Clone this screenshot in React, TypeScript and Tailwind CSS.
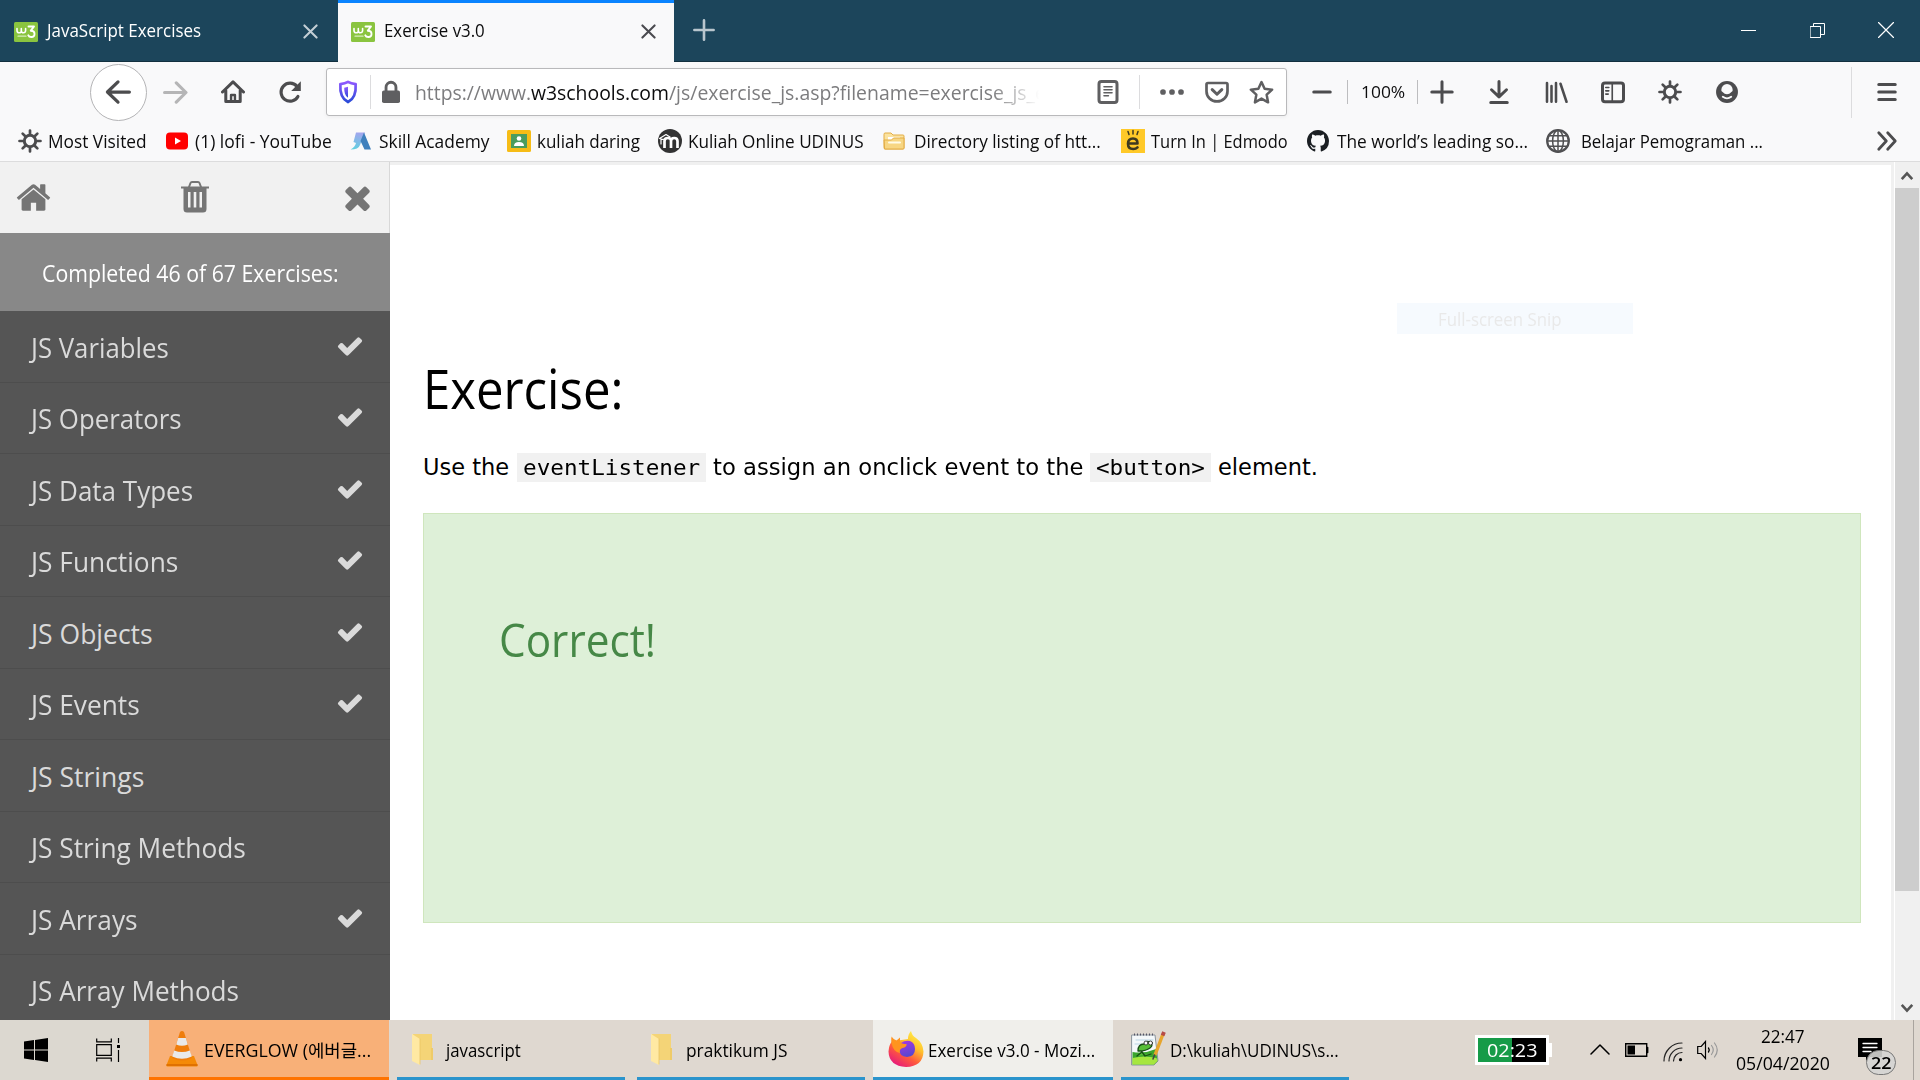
import { useLayoutEffect, useRef, useState } from "react";
import type { ReactNode } from "react";

/* One line of text, condensed or widened to fill the width its class sets. */
function T({ className = "", children }: { className?: string; children: ReactNode }) {
  const outer = useRef<HTMLSpanElement>(null);
  const inner = useRef<HTMLSpanElement>(null);
  const [k, setK] = useState(1);
  useLayoutEffect(() => {
    if (outer.current && inner.current && inner.current.offsetWidth > 0) {
      setK(outer.current.clientWidth / inner.current.offsetWidth);
    }
  }, []);
  return (
    <span ref={outer} className={`block shrink-0 whitespace-nowrap leading-none ${className}`}>
      <span ref={inner} className="inline-block origin-left" style={{ transform: `scaleX(${k})` }}>
        {children}
      </span>
    </span>
  );
}

function Icon({ className = "", box = "0 0 16 16", children }: { className?: string; box?: string; children: ReactNode }) {
  return (
    <svg viewBox={box} fill="none" strokeLinecap="round" strokeLinejoin="round" className={`block shrink-0 ${className}`}>
      {children}
    </svg>
  );
}

const stroke = { stroke: "currentColor", strokeWidth: 2 };

function W3Icon() {
  return (
    <Icon className="h-5 w-6" box="0 0 24 20">
      <rect width="24" height="20" rx="1.5" fill="#8ac43f" />
      <path d="M3 6.500v2q0 2.300 2.200 2.300T7.300 8.500V6.500M7.300 8.500q0 2.300 2.100 2.300t2.200-2.300V6.500" stroke="#fff" strokeWidth="1.600" />
      <path d="M14.500 4.500H20l-3.200 4.200q3.700 0 3.700 3.200T17.300 15Q15 15 14.300 13.300" stroke="#fff" strokeWidth="1.900" />
      <path d="M4 14.200h8" stroke="#d8edbd" strokeWidth="1.200" />
    </Icon>
  );
}

function Close({ className = "" }: { className?: string }) {
  return (
    <Icon className={`h-[15px] w-[15px] ${className}`}>
      <path d="M1.500 1.500l13 13M14.500 1.500l-13 13" stroke="currentColor" strokeWidth="2.200" />
    </Icon>
  );
}

function TabBar() {
  return (
    <div className="flex h-[62px] border-b border-[#12303f] bg-[#1c455b] text-white">
      <div className="flex w-[338px] items-center pl-[14px] pt-[2px] text-[17.500px]">
        <W3Icon />
        <T className="ml-[9px] w-[154px] pb-px">JavaScript Exercises</T>
        <Close className="ml-[102px] text-[#c3ced5]" />
      </div>
      <div className="-mb-px flex w-[336px] items-center border-t-[3px] border-[#0a84ff] bg-[#f9f9fa] pb-[2px] pl-[13px] text-[17.500px] text-[#0c0c0d]">
        <W3Icon />
        <T className="ml-[9px] w-[101px] pb-px">Exercise v3.0</T>
        <Close className="ml-[156px] text-[#4a4a4f]" />
      </div>
      <Icon className="ml-[19px] mt-[19px] h-[22px] w-[22px] text-[#b9c6ce]">
        <path d="M8 1v14M1 8h14" stroke="currentColor" strokeWidth="1.900" />
      </Icon>
      <div className="ml-auto flex h-[60px] items-center pr-[26px]">
        <div className="mr-[54px] h-px w-[15px] bg-white" />
        <Icon className="mr-[53px] h-[15px] w-[15px]" box="0 0 15 15">
          <path d="M.5 3.500h10v11h-10zM3.500 3.500v-3h11v11h-4" stroke="#fff" strokeLinejoin="miter" />
        </Icon>
        <Icon className="h-4 w-4">
          <path d="M.5.5l15 15M15.500.5l-15 15" stroke="#fff" strokeWidth="1.200" />
        </Icon>
      </div>
    </div>
  );
}

function UrlBar() {
  return (
    <div className="ml-[24px] flex h-[48px] w-[961px] items-center rounded-[3px] border border-[#b9b9bb] bg-white shadow-[0_1px_4px_rgba(0,0,0,0.06)]">
      <Icon className="ml-[9px] h-6 w-6">
        <defs>
          <linearGradient id="shield" x1="0" y1="0" x2="0" y2="1">
            <stop offset="0" stopColor="#9059ff" />
            <stop offset="1" stopColor="#2a4bd8" />
          </linearGradient>
        </defs>
        <path d="M8 1.300C6.500 2.200 4.500 2.600 2.900 2.700c-.3 4.600.3 9.600 5.100 12 4.800-2.400 5.400-7.400 5.100-12C11.500 2.600 9.500 2.200 8 1.300z" stroke="url(#shield)" strokeWidth="1.800" />
        <path d="M8 4.500v7.400C6 10.300 5.400 7.700 5.500 5.100 6.400 5 7.300 4.800 8 4.500z" fill="url(#shield)" />
      </Icon>
      <div className="ml-[10px] h-[34px] w-px bg-[#dcdcde]" />
      <Icon className="ml-[8px] h-6 w-6 text-[#5f5f61]">
        <path d="M4.700 8V4.800a3.300 3.300 0 0 1 6.600 0V8" stroke="currentColor" strokeWidth="1.900" />
        <rect x="2" y="7" width="12" height="8.300" rx="1.200" fill="currentColor" />
      </Icon>
      <div className="ml-[12px] flex w-[640px] py-1 text-[20.500px] text-[#7c7c7e] [mask-image:linear-gradient(to_right,#000_90%,transparent_97.500%)]">
        <T className="w-[116px]">https://www.</T>
        <T className="w-[138px] text-[#0c0c0d]">w3schools.com</T>
        <T className="w-[377px]">/js/exercise_js.asp?filename=exercise_js_e</T>
      </div>
      <Icon className="ml-[41px] h-6 w-6 text-[#5f5f61]">
        <rect x="2" y="1" width="12" height="14" rx="1.600" stroke="currentColor" strokeWidth="2" />
        <path d="M5.300 4.500h5.400M5.300 6.500h5.400M5.300 8.500h5.400M5.300 10.500h3" stroke="currentColor" strokeWidth="1" />
      </Icon>
      <div className="ml-[19px] h-[34px] w-px bg-[#dcdcde]" />
      <Icon className="ml-[20px] h-6 w-6 text-[#5f5f61]">
        <circle cx="2" cy="8" r="1.900" fill="currentColor" />
        <circle cx="8" cy="8" r="1.900" fill="currentColor" />
        <circle cx="14" cy="8" r="1.900" fill="currentColor" />
      </Icon>
      <Icon className="ml-[21px] h-6 w-6 text-[#5f5f61]">
        <path d="M2 2h12q1 0 1 1v4.500a7 6.800 0 0 1-14 0V3q0-1 1-1z" stroke="currentColor" strokeWidth="1.800" />
        <path d="M4.800 6.400L8 9.500l3.200-3.100" stroke="currentColor" strokeWidth="2" />
      </Icon>
      <Icon className="ml-[20px] h-[25px] w-[25px] text-[#5f5f61]">
        <path d="M8 1.300l2 4.300 4.800.6-3.500 3.200.9 4.900L8 11.900l-4.200 2.400.9-4.900L1.200 6.200 6 5.600z" stroke="currentColor" strokeWidth="1.600" />
      </Icon>
    </div>
  );
}

function NavBar() {
  return (
    <div className="flex h-[60px] items-center bg-[#f9f9fa] text-[#4c4c4e]">
      <div className="ml-[90px] flex h-[57px] w-[57px] items-center justify-center rounded-full border border-[#b4b4b6] bg-white">
        <Icon className="mr-px h-[26px] w-[26px]">
          <path d="M15 8H1.800M8 1.800L1.500 8 8 14.200" {...stroke} />
        </Icon>
      </div>
      <Icon className="ml-[16px] h-[25px] w-[25px] text-[#b5b5b6]">
        <path d="M1 8h13.200M8.500 1.800L14.700 8l-6.200 6.200" {...stroke} />
      </Icon>
      <Icon className="ml-[33px] h-6 w-6">
        <path d="M1 8l7-6.700L15 8M3.200 7v7.300h9.600V7" {...stroke} />
        <path d="M6.700 14v-4h2.600v4" stroke="currentColor" strokeWidth="1.600" />
      </Icon>
      <Icon className="ml-[33px] h-6 w-6">
        <path d="M13.300 11A6 6 0 1 1 12.600 4.200" {...stroke} strokeWidth={2.100} />
        <path d="M15.200.9v6.400H8.800z" fill="currentColor" />
      </Icon>
      <UrlBar />
      <Icon className="ml-[23px] h-6 w-6"><path d="M2.500 8h11" {...stroke} /></Icon>
      <div className="ml-[13px] h-6 w-px bg-[#bdbdbf]" />
      <T className="ml-[13px] w-[44px] pb-[2px] text-[17px] text-[#0c0c0d]">100%</T>
      <div className="ml-[12px] h-6 w-px bg-[#bdbdbf]" />
      <Icon className="ml-[12px] h-6 w-6"><path d="M8 1.200v13.600M1.200 8h13.600" {...stroke} /></Icon>
      <Icon className="ml-[33px] h-6 w-6"><path d="M8 1v10M3 6.500L8 11.300l5-4.800M2.500 15h11" {...stroke} /></Icon>
      <Icon className="ml-[33px] h-6 w-6"><path d="M2 2v12.500M5 4v10.500M8 2v12.500M11 2.500l4 12" {...stroke} strokeWidth={1.700} /></Icon>
      <Icon className="ml-[33px] h-6 w-6">
        <rect x="1" y="2" width="14" height="12.500" rx="1.700" {...stroke} />
        <path d="M7.500 2v12.500M3.200 5h2M3.200 7.200h2M3.200 9.400h1.600" stroke="currentColor" strokeWidth="1.100" />
      </Icon>
      <Gear className="ml-[33px] h-6 w-6" />
      <Icon className="ml-[33px] h-6 w-6">
        <circle cx="8" cy="8" r="7.300" fill="currentColor" />
        <ellipse cx="8" cy="6.600" rx="3.800" ry="3.900" fill="#f9f9fa" />
        <path d="M4.300 8.300Q8 12.300 11.700 8.300" stroke="currentColor" strokeWidth="1.500" />
        <path d="M5.200 11.200q2.800 2.100 5.600 0" stroke="#f9f9fa" strokeWidth="1.300" />
      </Icon>
      <div className="ml-auto h-[51px] w-px bg-[#dcdcde]" />
      <Icon className="ml-[23px] mr-[21px] h-6 w-6"><path d="M2.500 3h11M2.500 8h11M2.500 13h11" {...stroke} /></Icon>
    </div>
  );
}

function Gear({ className = "" }: { className?: string }) {
  return (
    <Icon className={className}>
      <circle cx="8" cy="8" r="3.800" stroke="currentColor" strokeWidth="2" />
      <path d="M8 1v2.300M8 12.700V15M1 8h2.300M12.700 8H15M3.100 3.100l1.600 1.600M11.300 11.300l1.600 1.600M12.900 3.100l-1.600 1.600M4.700 11.300l-1.600 1.600" stroke="currentColor" strokeWidth="1.800" />
    </Icon>
  );
}

function FolderMark() {
  return (
    <Icon className="ml-[19px] h-[22px] w-[22px]" box="0 0 22 22">
      <path d="M1 4q0-1 1-1h6l2 2h10q1 0 1 1v12q0 1-1 1H2q-1 0-1-1z" fill="#fbe3a0" stroke="#e3ad45" />
      <path d="M5 7h12v5H5z" fill="#fff" />
      <path d="M1.500 10h7l2-2H21v10q0 1-1 1H2z" fill="#f7d683" stroke="#e3ad45" />
      <path d="M6 12.500h11" stroke="#fffbe8" strokeWidth="2" />
    </Icon>
  );
}

function Bookmarks() {
  return (
    <div className="flex h-[40px] items-center border-b border-[#dcdcdd] bg-[#f9f9fa] pb-px text-[18px] text-[#0c0c0d]">
      <Gear className="ml-[18px] h-6 w-6 text-[#4c4c4e]" />
      <T className="ml-[6px] w-[99px]">Most Visited</T>
      <Icon className="ml-[19px] h-[18px] w-[22px]" box="0 0 22 18">
        <rect y="0.500" width="22" height="17" rx="4" fill="#f00" />
        <path d="M9 5.500v7l6-3.500z" fill="#fff" />
      </Icon>
      <T className="ml-[7px] w-[137px]">(1) lofi - YouTube</T>
      <Icon className="ml-[18px] h-[18px] w-[22px]" box="0 0 22 18">
        <defs>
          <linearGradient id="skill" x1=".5" y1="0" x2=".3" y2="1">
            <stop offset="0" stopColor="#a3a6ee" />
            <stop offset="1" stopColor="#5fd0e0" />
          </linearGradient>
        </defs>
        <path d="M6 .5h9L10 13q-1.500 4.500-9.500 4.500Q5 15 6 11L3.500 10z" fill="url(#skill)" />
        <path d="M14 .5l7 17h-6.500L10.500 9z" fill="#3f80bd" />
      </Icon>
      <T className="ml-[7px] w-[110px]">Skill Academy</T>
      <Icon className="ml-[18px] h-[22px] w-6" box="0 0 24 22">
        <rect width="24" height="22" rx="1.500" fill="#f6bc16" />
        <rect x="4" y="4" width="16" height="14" fill="#4a9c5f" />
        <circle cx="12" cy="8.500" r="2.300" fill="#fff" />
        <path d="M7 16q0-4 5-4t5 4z" fill="#fff" />
      </Icon>
      <T className="ml-[6px] w-[103px]">kuliah daring</T>
      <Icon className="ml-[18px] h-6 w-6" box="0 0 24 24">
        <circle cx="12" cy="12" r="12" fill="#333" />
        <path d="M6.500 19v-7q0-3 3.300-3t3.200 3v7M13 12q0-3 3.200-3t3.300 3v7" stroke="#fff" strokeWidth="2.700" strokeLinecap="butt" />
        <path d="M1.500 9.500L8 5.500l4 2.500-7 2.500zM3 10v5" stroke="#fff" strokeWidth="1.200" />
      </Icon>
      <T className="ml-[6px] w-[176px]">Kuliah Online UDINUS</T>
      <FolderMark />
      <T className="ml-[9px] w-[187px]">Directory listing of htt...</T>
      <Icon className="ml-[20px] h-6 w-6" box="0 0 24 24">
        <rect width="24" height="24" fill="#ffc928" />
        <path d="M7.500 14.500h9q0-5-4.500-5-5 0-5 5.300 0 5.200 5.200 5.200 2.800 0 4.300-1.600" stroke="#3e3a20" strokeWidth="2.600" />
        <path d="M8 5.500L7 2.500M12 5V1.500M16 5.500l1-3" stroke="#3e3a20" strokeWidth="1.500" />
      </Icon>
      <T className="ml-[6px] w-[137px]">Turn In | Edmodo</T>
      <Icon className="ml-[19px] h-[22px] w-[22px]" box="0 0 16 16">
        <path fill="#1b1f23" d="M8 0C3.580 0 0 3.580 0 8c0 3.540 2.290 6.530 5.470 7.590.4.070.55-.17.55-.38 0-.19-.01-.82-.01-1.490-2.010.37-2.530-.49-2.690-.94-.09-.23-.48-.94-.82-1.130-.28-.15-.68-.52-.01-.53.63-.01 1.080.58 1.230.82.72 1.210 1.870.87 2.330.66.070-.52.28-.87.51-1.070-1.780-.2-3.640-.89-3.640-3.950 0-.87.31-1.590.82-2.150-.08-.2-.36-1.020.08-2.120 0 0 .67-.21 2.200.82.64-.18 1.320-.27 2-.27s1.360.09 2 .27c1.530-1.040 2.200-.82 2.200-.82.44 1.100.16 1.920.08 2.120.51.56.82 1.270.82 2.150 0 3.070-1.870 3.750-3.650 3.950.29.25.54.73.54 1.480 0 1.070-.01 1.930-.01 2.200 0 .21.15.46.55.38A8.010 8.010 0 0 0 16 8c0-4.420-3.580-8-8-8z" />
      </Icon>
      <T className="ml-[8px] w-[191px]">The world’s leading so...</T>
      <Icon className="ml-[18px] h-6 w-6 text-[#505052]">
        <circle cx="8" cy="8" r="7.200" stroke="currentColor" strokeWidth="1.500" />
        <ellipse cx="8" cy="8" rx="3.600" ry="7.200" stroke="currentColor" strokeWidth="1" />
        <path d="M8 1v14M1 8h14M2 4.500h12M2 11.500h12" stroke="currentColor" strokeWidth="1" />
      </Icon>
      <T className="ml-[11px] w-[182px]">Belajar Pemograman ...</T>
      <Icon className="ml-auto mr-[22px] h-[22px] w-[22px] text-[#4c4c4e]">
        <path d="M2 2l5.500 6L2 14M8.500 2l5.500 6-5.500 6" {...stroke} />
      </Icon>
    </div>
  );
}

const CHECK =
  "M1671 566q0 40-28 68l-724 724-136 136q-28 28-68 28t-68-28l-136-136-362-362q-28-28-28-68t28-68l136-136q28-28 68-28t68 28l294 295 656-657q28-28 68-28t68 28l136 136q28 28 28 68z";
const HOME =
  "M1472 992v480q0 26-19 45t-45 19h-384v-384h-256v384h-384q-26 0-45-19t-19-45v-480q0-1 .5-3t.5-3l575-474 575 474q1 2 1 6zm223-69l-62 74q-8 9-21 11h-3q-13 0-21-7l-692-577-692 577q-12 8-24 7-13-2-21-11l-62-74q-8-10-7-23.500t11-21.500l719-599q32-26 76-26t76 26l244 204v-195q0-14 9-23t23-9h192q14 0 23 9t9 23v408l219 182q10 8 11 21.500t-7 23.500z";
const TIMES =
  "M1490 1322q0 40-28 68l-136 136q-28 28-68 28t-68-28l-294-294-294 294q-28 28-68 28t-68-28l-136-136q-28-28-28-68t28-68l294-294-294-294q-28-28-28-68t28-68l136-136q28-28 68-28t68 28l294 294 294-294q28-28 68-28t68 28l136 136q28 28 28 68t-28 68l-294 294 294 294q28 28 28 68z";

const lessons = [
  { name: "JS Variables", width: "w-[138px]", done: true },
  { name: "JS Operators", width: "w-[151px]", done: true },
  { name: "JS Data Types", width: "w-[162px]", done: true },
  { name: "JS Functions", width: "w-[147px]", done: true },
  { name: "JS Objects", width: "w-[122px]", done: true },
  { name: "JS Events", width: "w-[109px]", done: true },
  { name: "JS Strings", width: "w-[113px]", done: false },
  { name: "JS String Methods", width: "w-[215px]", done: false },
  { name: "JS Arrays", width: "w-[107px]", done: true },
  { name: "JS Array Methods", width: "w-[208px]", done: false },
];

function Sidebar() {
  return (
    <aside className="h-full w-[390px] shrink-0 overflow-hidden bg-[#555]">
      <div className="flex h-[71px] items-center justify-between border-r border-[#d8d8d8] bg-[#f1f1f1] pl-[15px] pr-[13px] text-[#757575]">
        <Icon className="h-[37px] w-[37px]" box="0 0 1792 1792"><path d={HOME} fill="currentColor" /></Icon>
        <Icon className="h-8 w-7 -translate-x-px -translate-y-px" box="0 0 28 32">
          <path d="M0 5.500h28v2H0z" fill="currentColor" />
          <path d="M8 6l1.500-4q.4-1 1.500-1h6q1.100 0 1.500 1L20 6" stroke="currentColor" strokeWidth="2" />
          <path fillRule="evenodd" d="M2.500 7h23v21q0 3.500-3.500 3.500H6q-3.500 0-3.500-3.500zM7 11v15.500h2.500V11zm5.700 0v15.500h2.600V11zm5.800 0v15.500H21V11z" fill="currentColor" />
        </Icon>
        <Icon className="h-[37px] w-[37px]" box="0 0 1792 1792"><path d={TIMES} fill="currentColor" /></Icon>
      </div>
      <div className="flex h-[78px] items-center bg-[#888] pb-px pl-[42px] pt-[3px] text-[23px] text-white">
        <T className="w-[297px]">Completed 46 of 67 Exercises:</T>
      </div>
      {lessons.map((l) => (
        <div key={l.name} className="flex h-[71.500px] items-center justify-between border-b border-[#4d4d4d] pl-[31px] pr-[26px] text-[26.500px] text-[#dadada]">
          <T className={`mt-[3px] ${l.width}`}>{l.name}</T>
          {l.done && <Icon className="mb-px h-[28px] w-[28px]" box="0 0 1792 1792"><path d={CHECK} fill="currentColor" /></Icon>}
        </div>
      ))}
    </aside>
  );
}

function Content() {
  return (
    <main className="relative flex-1 border-r-[3px] border-t-[3px] border-[#f0f0f0] bg-white pl-[33px] pr-[30px] text-black">
      <T className="mt-[196px] w-[200px] text-[54px]">Exercise:</T>
      <div className="mt-[38px] flex h-[29px] items-center font-['DejaVu_Sans'] text-[22.500px]">
        <T className="w-[86px]">Use the</T>
        <div className="ml-[8px] flex h-[29px] items-center bg-[#f1f1f1] px-[6px] pt-px">
          <T className="w-[177px] font-['DejaVu_Sans_Mono'] text-[22px]">eventListener</T>
        </div>
        <T className="ml-[7px] w-[370px]">to assign an onclick event to the</T>
        <div className="ml-[7px] flex h-[29px] items-center bg-[#f1f1f1] px-[6px] pt-px">
          <T className="w-[109px] font-['DejaVu_Sans_Mono'] text-[22px]">&lt;button&gt;</T>
        </div>
        <T className="ml-[7px] w-[100px]">element.</T>
      </div>
      <div className="mt-[31px] h-[410px] border border-[#cfe6bd] bg-[#def0d8] pl-[75px] pt-[103px]">
        <T className="w-[157px] text-[45px] text-[#468847]">Correct!</T>
      </div>
      <div className="absolute left-[1007px] top-[138px] flex h-[31px] w-[236px] items-center bg-[#f6fafe] pl-[41px] pt-[3px] text-[17.500px] text-[#e9e9e9]">
        <T className="w-[124px]">Full-screen Snip</T>
      </div>
    </main>
  );
}

function Scrollbar() {
  return (
    <div className="ml-px flex w-[25px] flex-col items-start bg-[#f0f0f0] text-[#555]">
      <Icon className="ml-[5px] mt-[7px] h-[14px] w-[14px]"><path d="M2 11.500L8 5l6 6.500" stroke="currentColor" strokeWidth="3" strokeLinecap="butt" strokeLinejoin="miter" /></Icon>
      <div className="mt-[5px] h-[703px] w-[24px] bg-[#cdcdcd]" />
      <Icon className="mb-[5px] ml-[5px] mt-auto h-[14px] w-[14px]"><path d="M2 4.500L8 11l6-6.500" stroke="currentColor" strokeWidth="3" strokeLinecap="butt" strokeLinejoin="miter" /></Icon>
    </div>
  );
}

function WinFolder() {
  return (
    <Icon className="h-[31px] w-[21px]" box="0 0 21 31">
      <path d="M1 0h19v26H5z" fill="#f4d477" />
      <path d="M19 14h2v12h-2z" fill="#efcb68" />
      <path d="M0 0l8 5v26l-8-4z" fill="#ffe9a3" />
      <path d="M8 5v25" stroke="#e6c25f" strokeWidth=".7" />
    </Icon>
  );
}

function Cone() {
  return (
    <Icon className="h-[36px] w-8" box="0 0 32 36">
      <path d="M4 25h24l3.500 9q.3 1.500-1 1.500h-29q-1.300 0-1-1.500z" fill="#f58a07" />
      <path d="M1 34h30" stroke="#d96a00" strokeWidth="1.600" />
      <path d="M14 1q2-2 4 0l8 26q-10 5-20 0z" fill="#ef7d0c" />
      <path d="M12.200 7h7.600l2 6.500q-5.800 2.500-11.600 0z" fill="#e9e9e9" />
      <path d="M8.200 19.500q7.800 3 15.600 0l2 6q-9.800 4.500-19.600 0z" fill="#e9e9e9" />
    </Icon>
  );
}

function Firefox() {
  return (
    <Icon className="h-[36px] w-[36px]" box="0 0 36 36">
      <defs>
        <linearGradient id="fox" x1=".85" y1=".05" x2=".25" y2="1">
          <stop offset="0" stopColor="#fff14a" />
          <stop offset=".35" stopColor="#ffc02c" />
          <stop offset=".65" stopColor="#ff5a3c" />
          <stop offset="1" stopColor="#e5177f" />
        </linearGradient>
        <linearGradient id="globe" x1=".3" y1="0" x2=".6" y2="1">
          <stop offset="0" stopColor="#a338e0" />
          <stop offset="1" stopColor="#5347d0" />
        </linearGradient>
      </defs>
      <path d="M23 0q1 5 5 7 7 5 7.500 13.500Q35 35.500 18 36 1 35 .5 20.500 1 14 3.500 11V6.500L7 10l13-2q0-5 3-8z" fill="url(#fox)" />
      <path d="M13 12q4-3 9-2 5 2 5 8 0 7.500-8 8-8-1-8-8z" fill="url(#globe)" />
      <path d="M3.500 11.500V5.500q2 3 5 4l3.500-3v4.500q1.500 2 6.500 2 .5 3-4 4-3.500 1-2.500 5Q5 21 3.500 11.500z" fill="#ff941f" />
    </Icon>
  );
}

function Notepad() {
  return (
    <Icon className="h-[36px] w-[36px]" box="0 0 36 36">
      <path d="M2 4h23l3 26-4 4H2z" fill="#f4f8fa" stroke="#8a949c" />
      <path d="M2.500 21q12 2 23.500-3l1.500 12-3.500 3.500H2.500z" fill="#3aa52c" />
      <path d="M2.500 27q12-3 24 0l1 3-3.500 3.500H2.500z" fill="#a6e63e" />
      <path d="M4 3.500h21" stroke="#556" strokeWidth="2" strokeDasharray="1 2" strokeLinecap="butt" />
      <path d="M6 9h17M5 13h6" stroke="#b8d5e4" />
      <path d="M8 20q0-7 6-7 2-4 6-2 4 3 0 6-4 3-11 3zM7 25l5-4 3 4 6-2" fill="#58bf38" stroke="#174d16" strokeWidth="1.300" />
      <circle cx="16" cy="12" r="2" fill="#fff" stroke="#222" strokeWidth=".8" />
      <circle cx="20.500" cy="12" r="2" fill="#fff" stroke="#222" strokeWidth=".8" />
      <path d="M33 3l-8 21" stroke="#e7a52c" strokeWidth="3.400" strokeLinecap="butt" />
      <path d="M34 1l-1.400 3.500" stroke="#b64b46" strokeWidth="3.800" strokeLinecap="butt" />
      <path d="M24.500 24l-1.500 4" stroke="#444" strokeWidth="1.500" />
    </Icon>
  );
}

function Taskbar() {
  return (
    <footer className="flex h-[60px] bg-[#dfd8d0] text-[17.500px] text-black">
      <div className="flex w-[149px] items-center bg-[#dcd8d0] pl-[24px]">
        <Icon className="h-6 w-6" box="0 0 24 24">
          <path d="M0 3.500l10-1.400v9.400H0zM11 2l13-1.900v11.400H11zM0 12.500h10v9.400L0 20.500zM11 12.500h13V24l-13-1.900z" fill="#000" />
        </Icon>
        <Icon className="ml-[48px] h-6 w-6" box="0 0 24 24">
          <path d="M.7.5v3.300h14.600V.5M.7 6.700h14.600v10.600H.7zM.7 23.500v-3.300h14.600v3.300M22.500 0v5M22.500 12v12" stroke="#000" strokeWidth="1.200" strokeLinecap="butt" strokeLinejoin="miter" />
          <path d="M21 7h3v3h-3z" fill="#000" />
        </Icon>
      </div>
      <div className="flex w-[240px] items-center border-b-[3px] border-[#ff7300] bg-[#f8b078] pl-[17px] pt-px">
        <Cone />
        <T className="ml-[6px] mt-[4px] w-[167px] font-['Open_Sans','Noto_Sans_CJK_KR',sans-serif]">EVERGLOW (에버글...</T>
      </div>
      <div className="ml-[8px] flex w-[228px] items-center border-b-[3px] border-[#2b94cc] pl-[15px] pt-px">
        <WinFolder />
        <T className="ml-[13px] mt-[4px] w-[75px]">javascript</T>
      </div>
      <div className="ml-[12px] flex w-[228px] items-center border-b-[3px] border-[#2b94cc] pl-[14px] pt-px">
        <WinFolder />
        <T className="ml-[14px] mt-[4px] w-[101px]">praktikum JS</T>
      </div>
      <div className="ml-[8px] flex w-[240px] items-center border-b-[3px] border-[#2b94cc] bg-[#f0efeb] pl-[15px] pt-px">
        <Firefox />
        <T className="ml-[4px] mt-[4px] w-[167px]">Exercise v3.0 - Mozi...</T>
      </div>
      <div className="ml-[8px] flex w-[228px] items-center border-b-[3px] border-[#2b94cc] pl-[9px] pt-px">
        <Notepad />
        <T className="ml-[4px] mt-[4px] w-[169px]">D:\kuliah\UDINUS\s...</T>
      </div>
      <div className="ml-[126px] flex items-center">
        <div className="flex h-[30px] w-[74px] items-center justify-center border-[3px] border-white bg-[linear-gradient(to_right,#169b48_50%,#000_50%)] pt-px text-[19px] text-white">
          <T className="w-[50px]">02:23</T>
        </div>
        <div className="h-[14px] w-[3px] bg-white" />
        <Icon className="ml-[38px] h-[20px] w-[20px]" box="0 0 20 20"><path d="M1 14l9-9 9 9" stroke="#000" strokeWidth="1.500" /></Icon>
        <Icon className="ml-[15px] h-[14px] w-[24px]" box="0 0 24 14">
          <path d="M.7.7h21v12.600H.7zM22.700 4.500v5" stroke="#000" strokeWidth="1.400" strokeLinejoin="miter" />
          <path d="M2.500 2.500h7.500v9H2.500z" fill="#000" />
        </Icon>
        <Icon className="ml-[14px] mt-[3px] h-[20px] w-[20px]" box="0 0 20 20">
          <path d="M1 19A18 18 0 0 1 19 1M6 19A13 13 0 0 1 19 6M10.500 19a8.500 8.500 0 0 1 8.500-8.500" stroke="#222" strokeWidth="1.200" />
          <circle cx="17.500" cy="17.700" r="1.600" fill="#000" />
        </Icon>
        <Icon className="ml-[14px] h-[20px] w-[22px]" box="0 0 22 20">
          <path d="M.7 6.500h3.500L8.500 1.500v17l-4.300-5H.7z" stroke="#000" strokeWidth="1.200" strokeLinejoin="miter" />
          <path d="M11.500 8q1.500 2 0 4" stroke="#000" strokeWidth="1.300" />
          <path d="M14.500 5.500q3.500 4.500 0 9M17.500 3q5.500 7 0 14" stroke="#999" strokeWidth="1.200" />
        </Icon>
        <div className="ml-[17px] flex flex-col items-center gap-[10px] text-[17.500px]">
          <T className="w-[44px]">22:47</T>
          <T className="w-[94px]">05/04/2020</T>
        </div>
        <div className="relative ml-[28px] h-6 w-6">
          <Icon className="h-6 w-6" box="0 0 24 24">
            <path d="M0 0h24v19H12l-4 4v-4H0z" fill="#000" />
            <path d="M5 5.500h14M5 9.500h14M5 13.500h8" stroke="#fff" strokeWidth="1.300" />
          </Icon>
          <div className="absolute left-[8px] top-[12px] flex h-[25px] w-[30px] items-center justify-center rounded-full border border-[#777] bg-[#d5d5d3]/90 text-[17px] font-semibold">
            <T className="w-[20px]">22</T>
          </div>
        </div>
      </div>
      <div className="ml-auto w-[7px] border-l border-[#a9a49e]" />
    </footer>
  );
}

export default function App() {
  return (
    <div className="flex h-[1080px] w-[1920px] flex-col overflow-hidden bg-white font-['Open_Sans',sans-serif]">
      <TabBar />
      <NavBar />
      <Bookmarks />
      <div className="flex min-h-0 flex-1">
        <Sidebar />
        <Content />
        <Scrollbar />
      </div>
      <Taskbar />
    </div>
  );
}
